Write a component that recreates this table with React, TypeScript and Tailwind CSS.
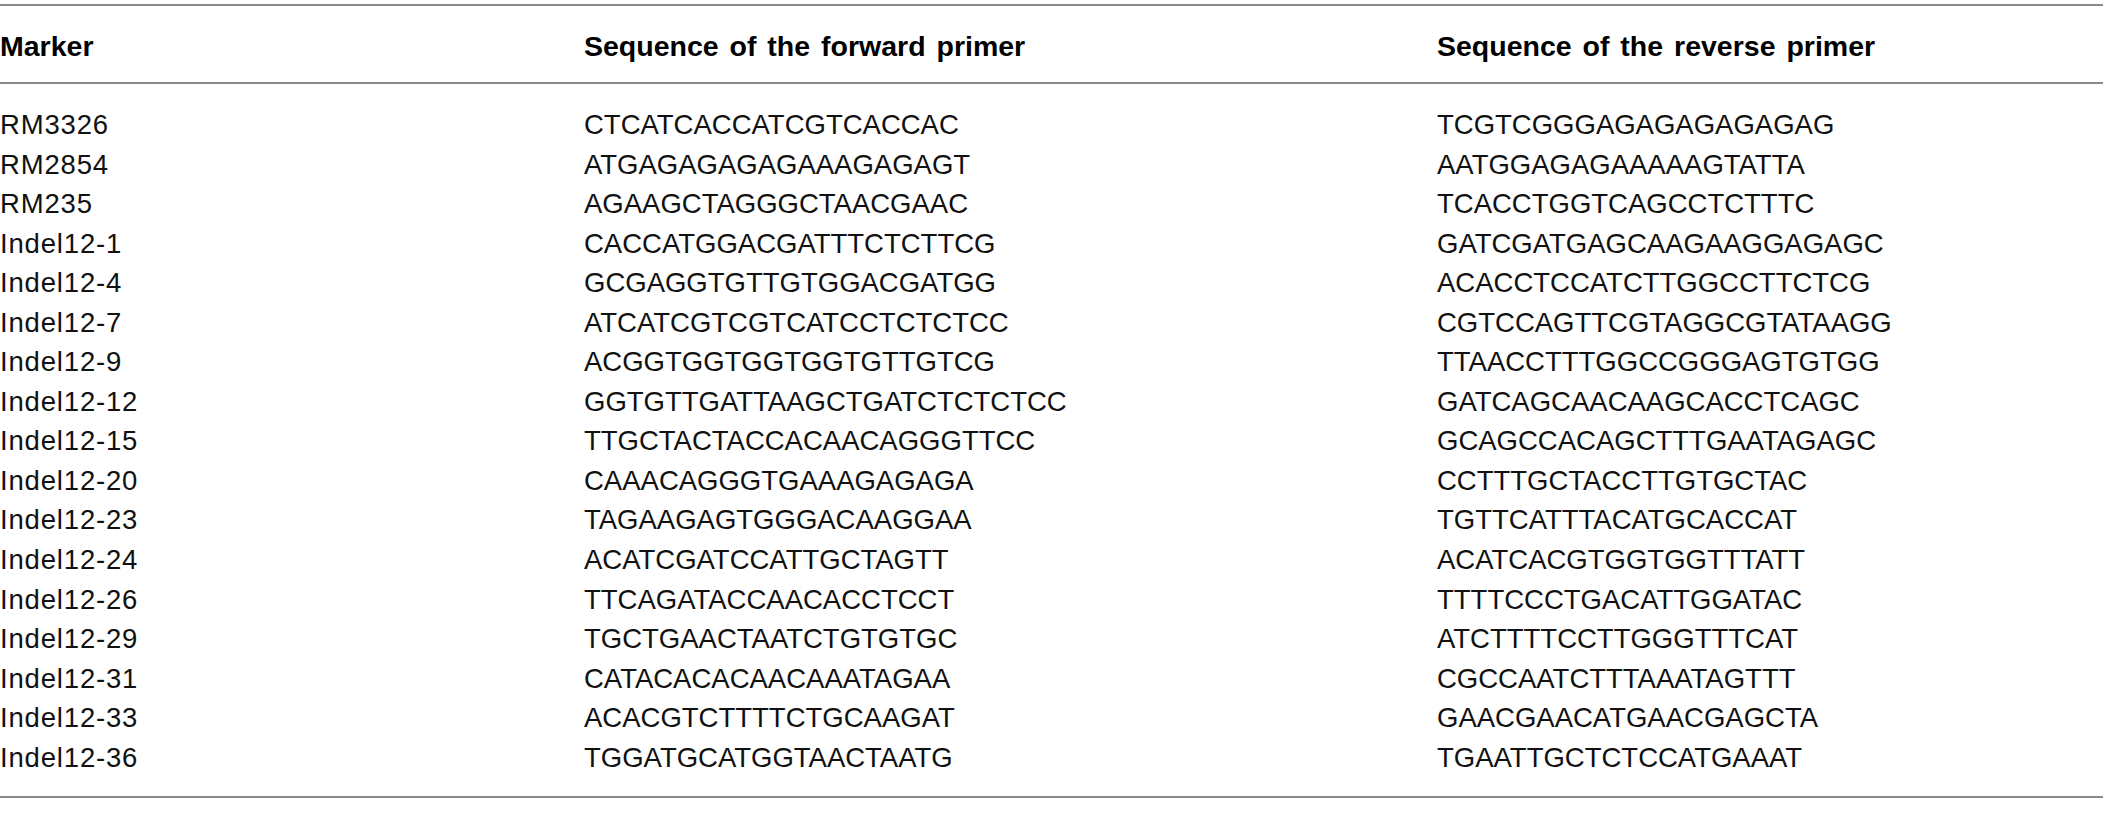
const rows: [string, string, string][] = [
  ["RM3326", "CTCATCACCATCGTCACCAC", "TCGTCGGGAGAGAGAGAGAG"],
  ["RM2854", "ATGAGAGAGAGAAAGAGAGT", "AATGGAGAGAAAAAGTATTA"],
  ["RM235", "AGAAGCTAGGGCTAACGAAC", "TCACCTGGTCAGCCTCTTTC"],
  ["Indel12-1", "CACCATGGACGATTTCTCTTCG", "GATCGATGAGCAAGAAGGAGAGC"],
  ["Indel12-4", "GCGAGGTGTTGTGGACGATGG", "ACACCTCCATCTTGGCCTTCTCG"],
  ["Indel12-7", "ATCATCGTCGTCATCCTCTCTCC", "CGTCCAGTTCGTAGGCGTATAAGG"],
  ["Indel12-9", "ACGGTGGTGGTGGTGTTGTCG", "TTAACCTTTGGCCGGGAGTGTGG"],
  ["Indel12-12", "GGTGTTGATTAAGCTGATCTCTCTCC", "GATCAGCAACAAGCACCTCAGC"],
  ["Indel12-15", "TTGCTACTACCACAACAGGGTTCC", "GCAGCCACAGCTTTGAATAGAGC"],
  ["Indel12-20", "CAAACAGGGTGAAAGAGAGA", "CCTTTGCTACCTTGTGCTAC"],
  ["Indel12-23", "TAGAAGAGTGGGACAAGGAA", "TGTTCATTTACATGCACCAT"],
  ["Indel12-24", "ACATCGATCCATTGCTAGTT", "ACATCACGTGGTGGTTTATT"],
  ["Indel12-26", "TTCAGATACCAACACCTCCT", "TTTTCCCTGACATTGGATAC"],
  ["Indel12-29", "TGCTGAACTAATCTGTGTGC", "ATCTTTTCCTTGGGTTTCAT"],
  ["Indel12-31", "CATACACACAACAAATAGAA", "CGCCAATCTTTAAATAGTTT"],
  ["Indel12-33", "ACACGTCTTTTCTGCAAGAT", "GAACGAACATGAACGAGCTA"],
  ["Indel12-36", "TGGATGCATGGTAACTAATG", "TGAATTGCTCTCCATGAAAT"],
];

const App = () => {
  return (
    <div className="h-[814px] w-[2103px] bg-white pt-[4px] font-['Liberation_Sans',Arial,sans-serif] text-black">
      <div className="border-y-2 border-[#8a8a8a]">
        <div className="grid h-[78px] grid-cols-[584px_853px_1fr] items-center border-b-2 border-[#8a8a8a] pt-[4px] text-[28.5px] font-bold [word-spacing:3px]">
          <div>Marker</div>
          <div>Sequence of the forward primer</div>
          <div>Sequence of the reverse primer</div>
        </div>
        <div className="pt-[21px] pb-[19px] text-[27.5px] text-[#111]">
          {rows.map(([marker, fwd, rev]) => (
            <div key={marker} className="grid h-[39.55px] grid-cols-[584px_853px_1fr] items-center leading-[39.55px]">
              <div className="tracking-[0.03em]">{marker}</div>
              <div>{fwd}</div>
              <div>{rev}</div>
            </div>
          ))}
        </div>
      </div>
    </div>
  );
};

export default App;
